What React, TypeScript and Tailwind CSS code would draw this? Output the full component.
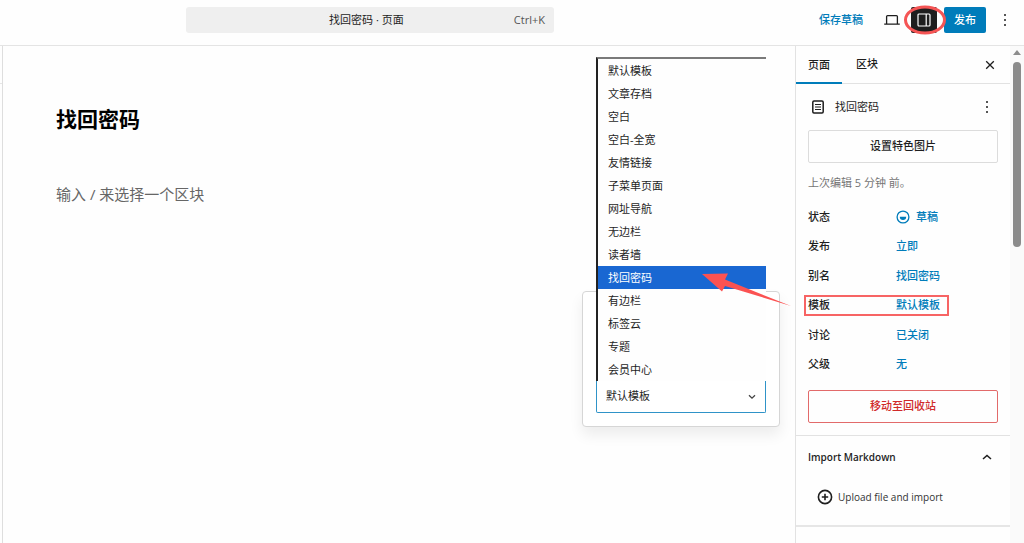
import { useState } from 'react';

const templates = [
  '默认模板',
  '文章存档',
  '空白',
  '空白-全宽',
  '友情链接',
  '子菜单页面',
  '网址导航',
  '无边栏',
  '读者墙',
  '找回密码',
  '有边栏',
  '标签云',
  '专题',
  '会员中心',
];

const summary = [
  { label: '状态', value: '草稿', draft: true },
  { label: '发布', value: '立即' },
  { label: '别名', value: '找回密码' },
  { label: '模板', value: '默认模板', marked: true },
  { label: '讨论', value: '已关闭' },
  { label: '父级', value: '无' },
];

function DotsIcon() {
  return (
    <svg width="4" height="14" viewBox="0 0 4 14" fill="currentColor">
      <circle cx="2" cy="2" r="1" />
      <circle cx="2" cy="7" r="1" />
      <circle cx="2" cy="12" r="1" />
    </svg>
  );
}

function ChevronUp() {
  return (
    <svg width="10" height="7" viewBox="0 0 10 7" fill="none" stroke="currentColor" strokeWidth="1.5">
      <path d="M1 5l4-3.6L9 5" />
    </svg>
  );
}

function Header() {
  return (
    <header className="h-[46px] shrink-0 flex items-center border-b border-[#e4e4e4] pb-[5px] pl-[186px] pr-[17px]">
      <button className="w-[368px] h-[26px] flex items-center rounded-[3px] bg-[#efefef] px-[9px]">
        <span className="flex-1 pl-[24px] text-center">找回密码 · 页面</span>
        <span className="text-[#555]">Ctrl+K</span>
      </button>
      <div className="ml-auto flex items-center">
        <button className="font-medium text-[#007cba]">保存草稿</button>
        <button aria-label="预览" className="ml-5">
          <svg width="18" height="14" viewBox="0 0 18 14" fill="none" stroke="currentColor" strokeWidth="1.3">
            <path d="M3.6 10.5V3.6c0-.6.4-1 1-1h8.8c.6 0 1 .4 1 1v6.9M1.2 11.2h15.6" />
          </svg>
        </button>
        <button aria-label="设置" className="relative ml-[10px] size-[26px] flex items-center justify-center rounded-[2px] bg-[#1e1e1e] text-white">
          <svg width="14" height="14" viewBox="0 0 14 14" fill="none" stroke="currentColor" strokeWidth="1.2">
            <rect x="1" y="1" width="12" height="12" rx="1" />
            <path d="M9.2 1v12" />
          </svg>
          <svg className="absolute -left-2 -top-1 max-w-none" width="44" height="34" viewBox="0 0 44 34" fill="none">
            <ellipse cx="22" cy="17" rx="19.5" ry="13" stroke="#f55555" strokeWidth="3" />
          </svg>
        </button>
        <button className="ml-[7px] h-[26px] px-[10px] rounded-[2px] bg-[#007cba] font-medium text-white">发布</button>
        <button aria-label="选项" className="ml-[17px]">
          <DotsIcon />
        </button>
      </div>
    </header>
  );
}

function TemplatePopover() {
  const [value, setValue] = useState('默认模板');

  return (
    <div className="absolute right-[15px] top-[245px] w-[198px] rounded-[4px] border border-[#d6d6d6] bg-white px-[13px] pt-[89px] pb-[13px] shadow-[0_8px_14px_rgba(0,0,0,0.07)]">
      <div className="relative">
        <ul role="listbox" aria-label="模板" className="absolute inset-x-0 bottom-full border-t-2 border-l-2 border-t-[#7a7a7a] border-l-[#222] bg-[#fefefe]">
          {templates.map((name) => (
            <li
              key={name}
              role="option"
              aria-selected={name === '找回密码'}
              className={`h-[23px] pl-[10px] leading-[23px] ${name === '找回密码' ? 'bg-[#1967d2] text-white' : ''}`}
            >
              {name}
            </li>
          ))}
        </ul>
        <select
          aria-label="模板"
          value={value}
          onChange={(e) => setValue(e.target.value)}
          className="block w-full h-8 appearance-none rounded-b-[2px] border border-t-0 border-[#2f93c8] bg-white pl-[9px]"
        >
          {templates.map((name) => (
            <option key={name}>{name}</option>
          ))}
        </select>
        <svg className="absolute right-[10px] top-[13px] pointer-events-none" width="8" height="6" viewBox="0 0 8 6" fill="none" stroke="#444" strokeWidth="1.3">
          <path d="M1 1.2l3 3 3-3" />
        </svg>
      </div>
      <svg className="absolute left-[117px] -top-[21px] max-w-none" width="92" height="36" viewBox="700 271 92 36">
        <path d="M702 274L728 273.6L725 279.6L791 306L725 286L722 291.5Z" fill="#fb5252" />
      </svg>
    </div>
  );
}

function Sidebar() {
  return (
    <aside className="w-[215px] shrink-0 overflow-hidden border-l border-[#e2e2e2]">
      <div className="h-[38px] flex items-stretch gap-0.5 border-b border-[#e2e2e2]">
        <button className="-mb-px border-y-2 border-t-transparent border-b-[#007cba] px-3 font-medium">页面</button>
        <button className="px-3 font-medium">区块</button>
        <button aria-label="关闭" className="ml-auto mr-[15px]">
          <svg width="10" height="10" viewBox="0 0 10 10" fill="none" stroke="currentColor" strokeWidth="1.3">
            <path d="M1.2 1.2l7.6 7.6M8.8 1.2L1.2 8.8" />
          </svg>
        </button>
      </div>

      <div className="border-b border-[#e2e2e2] px-3 pb-3">
        <div className="h-[46px] flex items-center pl-1">
          <svg width="12" height="14" viewBox="0 0 12 14" fill="none" stroke="currentColor">
            <rect x="0.8" y="1" width="10.4" height="12" rx="1.2" strokeWidth="1.5" />
            <path d="M3 4.5h6M3 7h6M3 9.5h6" strokeWidth="1.2" />
          </svg>
          <h2 className="ml-[11px]">找回密码</h2>
          <button aria-label="操作" className="ml-auto mr-[9px]">
            <DotsIcon />
          </button>
        </div>
        <button className="w-full h-[33px] rounded-[2px] border border-[#dcdcdc] font-medium">设置特色图片</button>
        <p className="pt-3 pb-[11px] leading-4 text-[#757575]">上次编辑 5 分钟 前。</p>
        <div className="h-[177px] grid grid-rows-6">
          {summary.map((row) => (
            <div key={row.label} className="relative flex items-center">
              <span className="w-[88px] font-medium">{row.label}</span>
              <button className="flex items-center font-medium text-[#007cba]">
                {row.draft && (
                  <svg className="mr-[6px]" width="14" height="14" viewBox="0 0 14 14" fill="none">
                    <circle cx="7" cy="7" r="5.9" stroke="currentColor" strokeWidth="1.3" />
                    <path d="M3.8 6.7h6.4a3.2 3.2 0 0 1-6.4 0z" fill="currentColor" />
                  </svg>
                )}
                {row.value}
              </button>
              {row.marked && <span className="absolute -left-1 w-[145px] h-[21px] border-2 border-[#f76464]" />}
            </div>
          ))}
        </div>
        <button className="mt-[11px] w-full h-[33px] rounded-[2px] border border-[#e26a6a] font-medium text-[#d02a2a]">移动至回收站</button>
      </div>

      <section className="border-b-2 border-[#e6e6e6] px-3">
        <h2>
          <button className="w-full h-[42px] flex items-center justify-between pr-[6px] text-[10px] font-semibold">
            Import Markdown
            <ChevronUp />
          </button>
        </h2>
        <button className="h-[38px] mb-[9px] pl-[9px] flex items-center gap-[5px] text-[10px] text-[#333]">
          <svg width="16" height="16" viewBox="0 0 16 16" fill="none" stroke="#1e1e1e" strokeWidth="1.6">
            <circle cx="8" cy="8" r="6.6" />
            <path d="M8 4.8v6.4M4.8 8h6.4" />
          </svg>
          Upload file and import
        </button>
      </section>
      <h2>
        <button className="w-full h-[40px] pl-3 flex items-center justify-between pr-[18px] text-[10px] font-semibold">
          Baidu Submit
          <ChevronUp />
        </button>
      </h2>
    </aside>
  );
}

export default function App() {
  return (
    <div className="h-screen flex flex-col overflow-hidden bg-[#fefefe] font-['Open_Sans','Noto_Sans_CJK_SC',sans-serif] text-[11px] text-[#1e1e1e]">
      <Header />
      <div className="flex-1 min-h-0 flex">
        <div className="w-[3px] shrink-0 border-r border-[#dedede]">
          <div className="h-[38px] border-b border-[#e6e6e6]" />
        </div>
        <main className="relative flex-1 min-w-0 pl-[53px] pt-[58px]">
          <h1 className="text-[21px] leading-[30px] font-bold text-black">找回密码</h1>
          <p className="mt-[48px] text-[15px] leading-[24px] text-[#666]">输入 / 来选择一个区块</p>
          <TemplatePopover />
        </main>
        <Sidebar />
        <div className="w-[14px] shrink-0 flex flex-col items-center bg-[#fafafa] pt-1">
          <svg width="8" height="5" viewBox="0 0 8 5">
            <path d="M0 5l4-5 4 5z" fill="#8b8b8b" />
          </svg>
          <div className="mt-[7px] w-2 h-[185px] rounded-full bg-[#8b8b8b]" />
        </div>
      </div>
    </div>
  );
}
